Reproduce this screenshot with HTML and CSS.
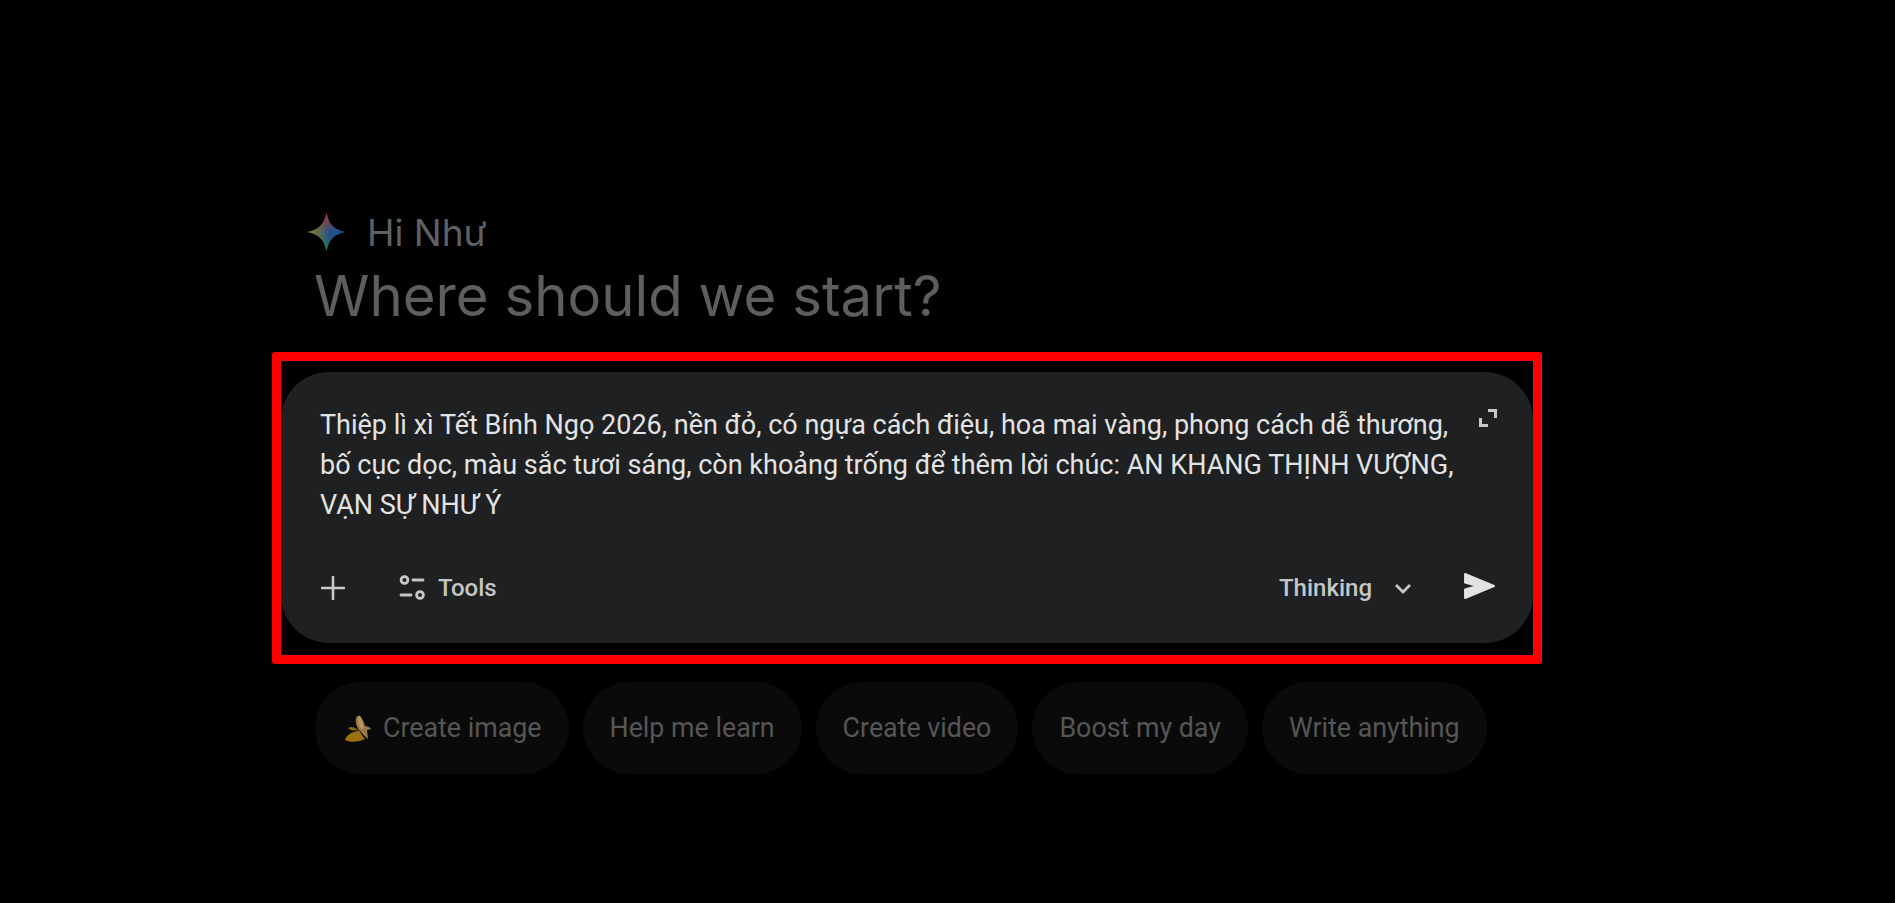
FILE: index.html
```html
<!DOCTYPE html>
<html lang="vi">
<head>
    <meta charset="UTF-8">
    <meta name="viewport" content="width=device-width, initial-scale=1.0">
    <title>Gemini</title>
    <link rel="stylesheet" href="styles.css">
</head>
<body>
    <main class="page">
        <!-- Greeting -->
        <div class="greeting">
            <svg class="spark" viewBox="0 0 36 36" aria-hidden="true">
                <defs>
                    <path id="sparkShape" d="M18 0C20.5 11 25 15.5 36 18C25 20.5 20.5 25 18 36C15.5 25 11 20.5 0 18C11 15.5 15.5 11 18 0Z"/>
                    <linearGradient id="sparkLeft" x1="0" y1="0.5" x2="0.6" y2="0.5">
                        <stop offset="0" stop-color="#a8821a"/>
                        <stop offset="1" stop-color="#a8821a" stop-opacity="0"/>
                    </linearGradient>
                    <linearGradient id="sparkTop" x1="0.5" y1="0" x2="0.5" y2="0.5">
                        <stop offset="0" stop-color="#b0302c"/>
                        <stop offset="1" stop-color="#b0302c" stop-opacity="0"/>
                    </linearGradient>
                    <linearGradient id="sparkBottom" x1="0.3" y1="1" x2="0.5" y2="0.55">
                        <stop offset="0" stop-color="#1f7a3a"/>
                        <stop offset="1" stop-color="#1f7a3a" stop-opacity="0"/>
                    </linearGradient>
                </defs>
                <use href="#sparkShape" fill="#1d4f8f"/>
                <use href="#sparkShape" fill="url(#sparkLeft)"/>
                <use href="#sparkShape" fill="url(#sparkTop)"/>
                <use href="#sparkShape" fill="url(#sparkBottom)"/>
            </svg>
            <span class="hello">Hi Như</span>
        </div>
        <h1 class="title">Where should we start?</h1>

        <!-- Prompt box with red frame -->
        <div class="frame">
            <div class="prompt">
                <div class="prompt-top">
                    <p class="prompt-text">Thiệp lì xì Tết Bính Ngọ 2026, nền đỏ, có ngựa cách điệu, hoa mai vàng, phong cách dễ thương, bố cục dọc, màu sắc tươi sáng, còn khoảng trống để thêm lời chúc: AN KHANG THỊNH VƯỢNG, VẠN SỰ NHƯ Ý</p>
                    <svg class="expand" viewBox="0 0 18 18" aria-hidden="true">
                        <path d="M9 1.5H16.5V9M1.5 9V16.5H9" fill="none" stroke="currentColor" stroke-width="3"/>
                    </svg>
                </div>
                <div class="toolbar">
                    <svg class="plus" viewBox="0 0 24 24" aria-hidden="true">
                        <path d="M12 1V23M1 12H23" fill="none" stroke="currentColor" stroke-width="2.6" stroke-linecap="round"/>
                    </svg>
                    <button class="tools">
                        <svg class="tools-icon" viewBox="0 0 26 26" aria-hidden="true">
                            <g fill="none" stroke="currentColor" stroke-width="2.8" stroke-linecap="round">
                                <circle cx="5.5" cy="5" r="3.4"/>
                                <path d="M14 5H24"/>
                                <path d="M2 20H12"/>
                                <circle cx="21" cy="20" r="3.4"/>
                            </g>
                        </svg>
                        Tools
                    </button>
                    <button class="mode">
                        Thinking
                        <svg class="chevron" viewBox="0 0 18 11" aria-hidden="true">
                            <path d="M2 2L9 9L16 2" fill="none" stroke="currentColor" stroke-width="2.8"/>
                        </svg>
                    </button>
                    <svg class="send" viewBox="120 -800 760 640" aria-hidden="true">
                        <path fill="currentColor" stroke="currentColor" stroke-width="50" stroke-linejoin="round" d="M145 -185V-395L450 -480L145 -565V-775L855 -480Z"/>
                    </svg>
                </div>
            </div>
        </div>

        <!-- Suggestion chips -->
        <div class="chips">
            <button class="chip chip-first">
                <svg class="banana" viewBox="0 0 26 27" aria-hidden="true">
                    <path fill="#9a7a4a" d="M11 3C12 1 14 0 15 1C18 4 19 8 20 11C22 11 25 12 26 14L22 15L23 24C20 22 18 19 15 16C12 13 10 8 11 3Z"/>
                    <path fill="#b8945f" d="M13 2C14 1 15 1 15.500 2C17 5 18 9 18.500 14L15.500 13C13.500 10 12.500 6 13 2Z"/>
                    <path fill="#8a6510" d="M3 13C6 11 10 12 13 15C10 16 6 16 3 13Z"/>
                    <path fill="#9a7210" d="M14 15C16 19 18 21 20 24C14 27 6 28 0 25C1 21 5 18 9 17C11 16.500 13 16 14 15Z"/>
                </svg>
                Create image
            </button>
            <button class="chip">Help me learn</button>
            <button class="chip">Create video</button>
            <button class="chip">Boost my day</button>
            <button class="chip">Write anything</button>
        </div>
    </main>
</body>
</html>
```

FILE: styles.css
```css
body {
    font-family: 'Roboto', 'Liberation Sans', sans-serif;
    margin: 0;
    padding: 0;
    background: #000;
    color: #e3e3e3;
    height: 903px;
    overflow: hidden;
}

button {
    font-family: inherit;
    background: none;
    border: none;
    padding: 0;
    color: inherit;
    cursor: pointer;
}

.page {
    display: flex;
    flex-direction: column;
    align-items: flex-start;
    padding: 210px 0 0 272px;
}

/* Greeting */
.greeting {
    display: flex;
    align-items: center;
    gap: 21px;
    margin-left: 35px;
    height: 44px;
}

.spark {
    width: 39px;
    height: 38px;
}

.hello {
    font-family: 'Inter', sans-serif;
    font-size: 37px;
    color: #5e6164;
}

.title {
    font-family: 'Inter', sans-serif;
    font-weight: 400;
    font-size: 56.3px;
    line-height: 70px;
    margin: 7px 0 0 42px;
    color: #5e5e5e;
}

/* Red frame */
.frame {
    width: 1252px;
    margin-top: 21px;
    padding: 11px 0 12px;
    border: 9px solid #f00;
    border-radius: 3px;
}

.prompt {
    display: flex;
    flex-direction: column;
    justify-content: space-between;
    height: 271px;
    box-sizing: border-box;
    padding: 33px 36px 40px 39px;
    background: #1f2022;
    border-radius: 48px;
}

.prompt-top {
    display: flex;
    align-items: flex-start;
    justify-content: space-between;
}

.prompt-text {
    margin: 0;
    width: 1150px;
    font-size: 27px;
    line-height: 40px;
}

.expand {
    width: 18px;
    height: 18px;
    margin-top: 4px;
    color: #c4c7c5;
}

/* Toolbar */
.toolbar {
    display: flex;
    align-items: center;
    color: #c4c7c5;
}

.plus {
    width: 24px;
    height: 24px;
    margin-left: 1px;
    color: #c9cbcb;
}

.tools {
    display: flex;
    align-items: center;
    gap: 13px;
    margin-left: 54px;
    font-size: 24px;
    font-weight: 500;
}

.tools-icon {
    width: 26px;
    height: 26px;
}

.mode {
    display: flex;
    align-items: center;
    gap: 22px;
    margin-left: auto;
    font-size: 24px;
    font-weight: 500;
}

.chevron {
    width: 18px;
    height: 11px;
}

.send {
    width: 31px;
    height: 26px;
    margin: 0 2px 4px 52px;
    color: #e3e3e3;
}

/* Chips */
.chips {
    display: flex;
    gap: 14px;
    margin: 18px 0 0 43px;
}

.chip {
    display: flex;
    align-items: center;
    height: 92px;
    padding: 0 27px;
    background: #0a0a0a;
    border-radius: 46px;
    font-size: 26.8px;
    color: #565656;
}

.chip-first {
    padding-left: 30px;
    gap: 12px;
}

.banana {
    width: 26px;
    height: 27px;
}
```
